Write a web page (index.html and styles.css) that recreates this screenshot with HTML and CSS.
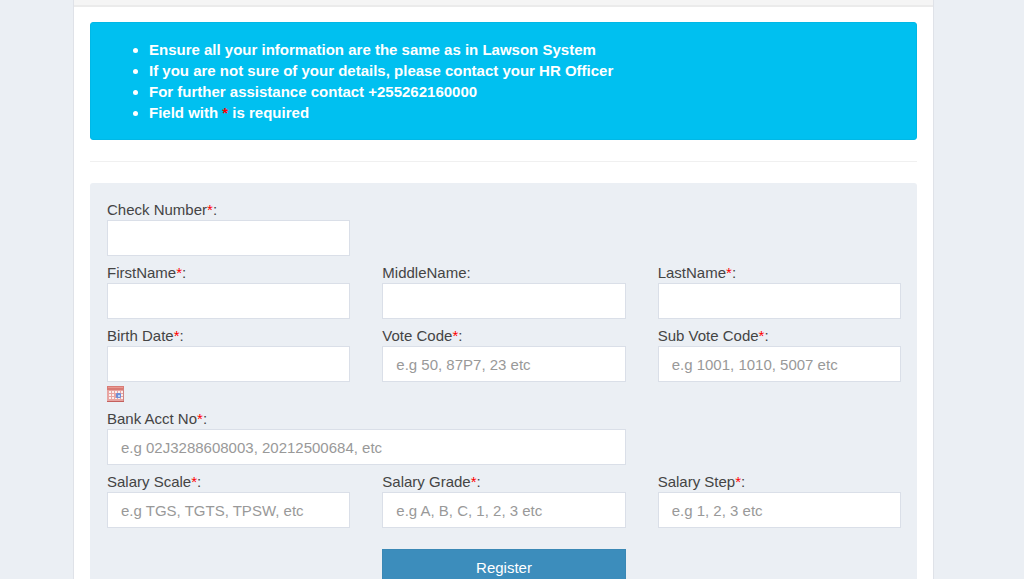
FILE: index.html
```html
<!DOCTYPE html>
<html lang="en">
<head>
<meta charset="utf-8">
<title>Register</title>
<link rel="stylesheet" href="styles.css">
</head>
<body>
<main class="panel">
  <div class="panel-heading"></div>
  <div class="panel-body">
    <div class="alert">
      <ul class="alert-list">
        <li>Ensure all your information are the same as in Lawson System</li>
        <li>If you are not sure of your details, please contact your HR Officer</li>
        <li>For further assistance contact +255262160000</li>
        <li>Field with <span class="required">*</span> is required</li>
      </ul>
    </div>
    <hr class="divider">
    <form class="well">
      <div class="field first">
        <label for="check">Check Number<span class="required">*</span>:</label>
        <input id="check" type="text">
      </div>
      <div class="field first">
        <label for="fname">FirstName<span class="required">*</span>:</label>
        <input id="fname" type="text">
      </div>
      <div class="field">
        <label for="mname">MiddleName:</label>
        <input id="mname" type="text">
      </div>
      <div class="field">
        <label for="lname">LastName<span class="required">*</span>:</label>
        <input id="lname" type="text">
      </div>
      <div class="field first">
        <label for="birth">Birth Date<span class="required">*</span>:</label>
        <input id="birth" type="text">
        <button class="calendar" type="button" aria-label="Choose date">
          <svg width="17" height="16" viewBox="0 0 17 16">
            <rect width="17" height="16" fill="#e8a5a2"/>
            <rect width="17" height="4" fill="#d97b75"/>
            <path d="M1 1.5h15" stroke="#e89a92"/>
            <path d="M2 5h2v2H2zM5 5h2v2H5zM8 5h2v2H8zM11 5h2v2h-2zM14 5h2v2h-2zM2 8h2v2H2zM5 8h2v2H5zM14 8h2v2h-2zM2 11h2v2H2zM5 11h2v2H5zM8 12h2v1H8zM11 12h2v1h-2zM14 11h2v2h-2z" fill="#fbeeee"/>
            <rect x="9" y="7" width="5" height="5" rx="1" fill="#6f8fd8"/>
            <rect x="11" y="9" width="2" height="2" fill="#b9d3f6"/>
            <path d="M0 15.5h17" stroke="#c4605d"/>
            <path d="M16.5 3v12" stroke="#cf8583"/>
          </svg>
        </button>
      </div>
      <div class="field">
        <label for="vote">Vote Code<span class="required">*</span>:</label>
        <input id="vote" type="text" placeholder="e.g 50, 87P7, 23 etc">
      </div>
      <div class="field">
        <label for="subvote">Sub Vote Code<span class="required">*</span>:</label>
        <input id="subvote" type="text" placeholder="e.g 1001, 1010, 5007 etc">
      </div>
      <div class="field wide">
        <label for="bank">Bank Acct No<span class="required">*</span>:</label>
        <input id="bank" type="text" placeholder="e.g 02J3288608003, 20212500684, etc">
      </div>
      <div class="field first">
        <label for="scale">Salary Scale<span class="required">*</span>:</label>
        <input id="scale" type="text" placeholder="e.g TGS, TGTS, TPSW, etc">
      </div>
      <div class="field">
        <label for="grade">Salary Grade<span class="required">*</span>:</label>
        <input id="grade" type="text" placeholder="e.g A, B, C, 1, 2, 3 etc">
      </div>
      <div class="field">
        <label for="step">Salary Step<span class="required">*</span>:</label>
        <input id="step" type="text" placeholder="e.g 1, 2, 3 etc">
      </div>
      <button class="register" type="submit">Register</button>
    </form>
  </div>
</main>
</body>
</html>
```

FILE: styles.css
```css
* {
  box-sizing: border-box;
}

html {
  overflow: hidden;
}

body {
  margin: 0;
  padding: 0 90px 0 73px;
  background: #ebeff4;
  color: #444;
  font: 15px/21px "Liberation Sans", Arial, sans-serif;
}

.panel {
  background: #fff;
  border: solid #dfe2e8;
  border-width: 0 1px;
}

.panel-heading {
  height: 7px;
  background: #f5f5f5;
  border-bottom: 2px solid #ebebeb;
}

.panel-body {
  padding: 15px 16px;
}

.alert {
  padding: 16px;
  background: #00c0f0;
  border: 1px solid #00b8e6;
  border-radius: 3px;
  color: #fff;
  font-weight: bold;
}

.alert-list {
  margin: 0;
  padding-left: 42px;
}

.required {
  color: #f00;
}

.divider {
  margin: 21px 0;
  border: 0;
  border-top: 1px solid #f0f0f0;
}

.well {
  display: grid;
  grid-template-columns: repeat(3, 1fr);
  column-gap: 32px;
  row-gap: 6px;
  padding: 16px 16px 16px 17px;
  background: #ebeff4;
  border-radius: 3px;
}

.field {
  display: flex;
  flex-direction: column;
}

.first {
  grid-column-start: 1;
}

.wide {
  grid-column: 1 / span 2;
}

.field input {
  width: 100%;
  height: 36px;
  padding: 0 13px;
  border: 1px solid #dadfe8;
  border-radius: 0;
  background: #fff;
  color: #555;
  font: inherit;
}

.field input::placeholder {
  color: #999;
  opacity: 1;
}

.calendar {
  display: flex;
  align-items: flex-end;
  align-self: flex-start;
  height: 20px;
  padding: 0;
  border: 0;
  background: none;
}

.register {
  grid-column: 2;
  height: 36px;
  margin-top: 15px;
  border: 1px solid #3a88b5;
  background: #3c8dbc;
  color: #fff;
  font: inherit;
}
```
